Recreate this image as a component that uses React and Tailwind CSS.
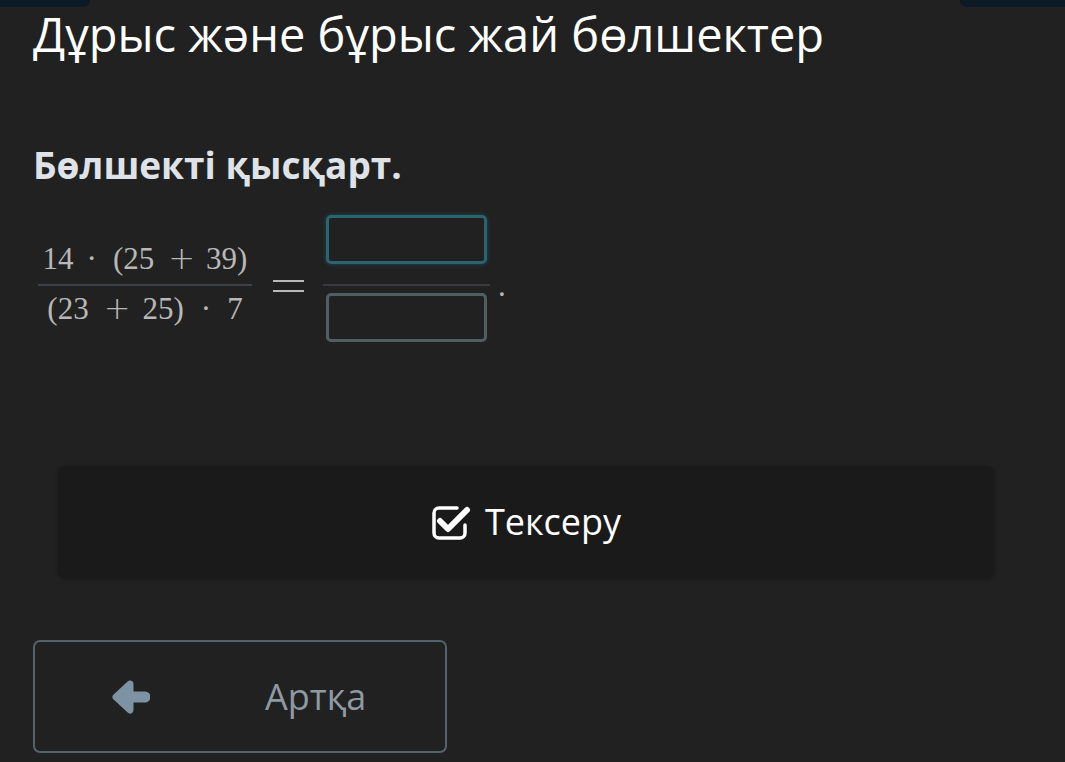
import React from "react";

function CheckIcon() {
  return (
    <svg width="40" height="36" viewBox="0 0 40 36" fill="none">
      <path
        d="M26 4 H8 a5 5 0 0 0 -5 5 V29 a5 5 0 0 0 5 5 H29 a5 5 0 0 0 5 -5 V21"
        stroke="#ffffff"
        strokeWidth="3.5"
        strokeLinecap="round"
        strokeLinejoin="round"
      />
      <path
        d="M9 17 L17 25 L36 6"
        stroke="#ffffff"
        strokeWidth="6"
        strokeLinecap="round"
        strokeLinejoin="round"
      />
    </svg>
  );
}

function ArrowIcon() {
  return (
    <svg width="38" height="34" viewBox="0 0 38 34" fill="none">
      <polygon
        points="18,4 4,17 18,30"
        fill="#7d93a3"
        stroke="#7d93a3"
        strokeWidth="7"
        strokeLinejoin="round"
      />
      <path d="M12 17 H33" stroke="#7d93a3" strokeWidth="11" strokeLinecap="round" />
    </svg>
  );
}

export default function App() {
  return (
    <div className="min-h-screen w-full bg-[#212121] font-['Open_Sans',sans-serif] overflow-hidden">
      <div className="flex justify-between h-[7px]">
        <div className="w-[90px] bg-[#0b1a25] rounded-br-[8px]" />
        <div className="w-[105px] bg-[#0b1a25] rounded-bl-[8px]" />
      </div>

      <h1 className="pl-[33px] text-[47px] leading-[54px] text-white font-normal">
        Дұрыс және бұрыс жай бөлшектер
      </h1>

      <p className="pl-[33px] mt-[82px] text-[37px] leading-[44px] font-bold text-[#dfe3e8]">
        Бөлшекті қысқарт.
      </p>

      <div className="mt-[28px] pl-[38px] flex items-start font-['Liberation_Serif',serif] text-[31px] text-[#b8b8b8]">
        <div className="mt-[25px] flex flex-col items-center w-[214px]">
          <div className="flex items-baseline leading-[36px] h-[36px]">
            <span>14</span>
            <span className="ml-[13px]">·</span>
            <span className="ml-[16px]">(25</span>
            <span className="ml-[14px] font-['DejaVu_Sans',sans-serif] font-extralight text-[32px]">+</span>
            <span className="ml-[11px]">39)</span>
          </div>
          <div className="mt-[8px] h-[2px] w-full bg-[#3c4247]" />
          <div className="mt-[4px] flex items-baseline leading-[36px] h-[36px]">
            <span>(23</span>
            <span className="ml-[15px] font-['DejaVu_Sans',sans-serif] font-extralight text-[32px]">+</span>
            <span className="ml-[12px]">25)</span>
            <span className="ml-[17px]">·</span>
            <span className="ml-[16px]">7</span>
          </div>
        </div>

        <div className="ml-[21px] mt-[65px] w-[31px] flex flex-col gap-[8px]">
          <div className="h-[2px] bg-[#b8b8b8]" />
          <div className="h-[2px] bg-[#b8b8b8]" />
        </div>

        <div className="ml-[19px] flex flex-col items-center w-[167px]">
          <div className="w-[161px] h-[49px] rounded-[5px] border-[3px] border-[#2a6470] shadow-[0_0_4px_#1e4f58]" />
          <div className="mt-[20px] h-[2px] w-full bg-[#3a3a3e]" />
          <div className="mt-[7px] w-[161px] h-[49px] rounded-[5px] border-[3px] border-[#4d605f]" />
        </div>

        <div className="ml-[8px] mt-[53px] leading-[36px]">.</div>
      </div>

      <div className="mt-[124px] ml-[58px] w-[936px] h-[112px] rounded-[8px] bg-[#1a1a1a] shadow-[0_1px_4px_rgba(0,0,0,0.35)] flex items-center justify-center">
        <CheckIcon />
        <span className="ml-[14px] text-[36px] leading-[44px] text-white">Тексеру</span>
      </div>

      <div className="mt-[62px] ml-[33px] w-[414px] h-[113px] rounded-[7px] border-2 border-[#55636b] flex items-center pl-[77px]">
        <ArrowIcon />
        <span className="ml-[115px] text-[36px] leading-[44px] text-[#8d9aa3]">Артқа</span>
      </div>
    </div>
  );
}
